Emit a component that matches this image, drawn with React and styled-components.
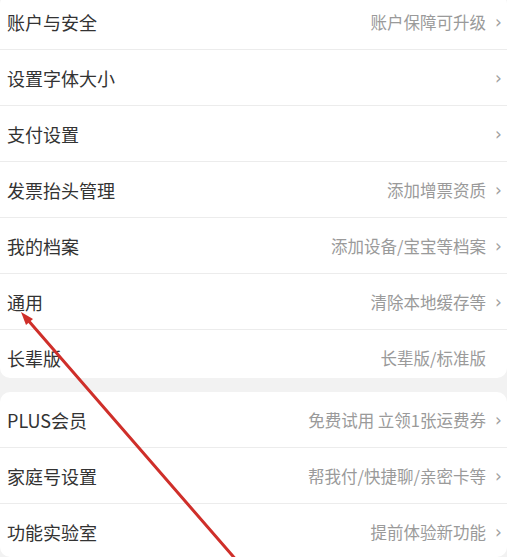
import React from "react";
import styled, { createGlobalStyle } from "styled-components";

const GlobalStyle = createGlobalStyle`
	html, body {
		margin: 0;
		padding: 0;
		overflow: hidden;
		background: #f2f2f2;
		font-family: "Noto Sans CJK SC", "Noto Sans", sans-serif;
	}
`;

const groups = [
	[
		{ label: "账户与安全", value: "账户保障可升级", arrow: true },
		{ label: "设置字体大小", value: "", arrow: true },
		{ label: "支付设置", value: "", arrow: true },
		{ label: "发票抬头管理", value: "添加增票资质", arrow: true },
		{ label: "我的档案", value: "添加设备/宝宝等档案", arrow: true },
		{ label: "通用", value: "清除本地缓存等", arrow: true },
		{ label: "长辈版", value: "长辈版/标准版", arrow: false },
	],
	[
		{ label: "PLUS会员", value: "免费试用 立领1张运费券", arrow: true },
		{ label: "家庭号设置", value: "帮我付/快捷聊/亲密卡等", arrow: true },
		{ label: "功能实验室", value: "提前体验新功能", arrow: true },
	],
];

const App = () => {
	return (
		<Page>
			<GlobalStyle />
			{groups.map((items, gi) => (
				<Card key={gi} first={gi === 0}>
					{items.map((item) => (
						<Row key={item.label}>
							<Label>{item.label}</Label>
							<Right>
								{item.value && <Value>{item.value}</Value>}
								<Chevron visible={item.arrow}>›</Chevron>
							</Right>
						</Row>
					))}
				</Card>
			))}
			<Annotation width="507" height="557" viewBox="0 0 507 557">
				<line
					x1="27"
					y1="319"
					x2="238"
					y2="562"
					stroke="#cf2f2a"
					strokeWidth="3"
					strokeLinecap="round"
				/>
				<polygon points="21,312 33,319 26,325" fill="#cf2f2a" />
			</Annotation>
		</Page>
	);
};

const Page = styled.div`
	position: relative;
	width: 507px;
	height: 557px;
	overflow: hidden;
	display: flex;
	flex-direction: column;
	gap: 14px;
`;

const Card = styled.div`
	background: #fff;
	border-radius: 10px;
	margin-top: ${(p) => (p.first ? "-6px" : "0")};
	overflow: hidden;
`;

const Row = styled.div`
	height: 56px;
	display: flex;
	align-items: center;
	justify-content: space-between;
	padding: 0 4px 0 7px;
	box-sizing: border-box;
	border-bottom: 1px solid #ececec;

	&:last-child {
		border-bottom: none;
	}
`;

const Label = styled.span`
	font-size: 18px;
	color: #333;
`;

const Right = styled.div`
	display: flex;
	align-items: center;
	gap: 9px;
`;

const Value = styled.span`
	font-size: 16.5px;
	color: #9a9a9a;
`;

const Chevron = styled.span`
	font-family: "DejaVu Sans", sans-serif;
	font-size: 17px;
	color: #a0a0a0;
	width: 8px;
	visibility: ${(p) => (p.visible ? "visible" : "hidden")};
`;

const Annotation = styled.svg`
	position: absolute;
	left: 0;
	top: 0;
	pointer-events: none;
`;

export default App;
